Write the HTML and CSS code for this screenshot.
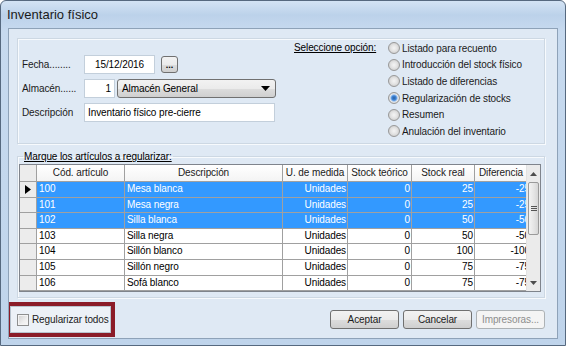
FILE: index.html
```html
<!DOCTYPE html>
<html>
  <head>
    <title>Inventario físico</title>
    <link rel="stylesheet" href="styles.css">
  </head>
  <body>
    <div class="window">
      <div class="titlebar">Inventario físico</div>
      <div class="client">

        <!-- Datos generales y opciones -->
        <div class="group top-group">
          <div class="fields">
            <div class="field-row">
              <span class="field-label">Fecha........</span>
              <span class="input input-date">15/12/2016</span>
              <span class="btn-dots">...</span>
            </div>
            <div class="field-row">
              <span class="field-label">Almacén......</span>
              <span class="input input-num">1</span>
              <span class="combo">
                Almacén General
                <svg class="combo-arrow" width="9" height="5" viewBox="0 0 9 5"><path d="M0 0h9L4.5 5z" fill="#000"/></svg>
              </span>
            </div>
            <div class="field-row">
              <span class="field-label">Descripción</span>
              <span class="input input-desc">Inventario físico pre-cierre</span>
            </div>
          </div>

          <div class="options">
            <span class="options-label">Seleccione opción:</span>
            <div class="radio-list">
              <div class="radio-row"><span class="radio"></span>Listado para recuento</div>
              <div class="radio-row"><span class="radio"></span>Introducción del stock físico</div>
              <div class="radio-row"><span class="radio"></span>Listado de diferencias</div>
              <div class="radio-row"><span class="radio on"></span>Regularización de stocks</div>
              <div class="radio-row"><span class="radio"></span>Resumen</div>
              <div class="radio-row"><span class="radio"></span>Anulación del inventario</div>
            </div>
          </div>
        </div>

        <!-- Rejilla de artículos -->
        <fieldset class="group grid-group">
          <legend>Marque los artículos a regularizar:</legend>
          <div class="grid-wrap">
            <div class="grid">
              <div class="hd ind"></div>
              <div class="hd">Cód. artículo</div>
              <div class="hd">Descripción</div>
              <div class="hd">U. de medida</div>
              <div class="hd">Stock teórico</div>
              <div class="hd">Stock real</div>
              <div class="hd hd-last">Diferencia</div>

              <div class="ind"><svg width="6" height="9" viewBox="0 0 6 9"><path d="M0 0l6 4.5L0 9z" fill="#000"/></svg></div>
              <div class="sel">100</div><div class="sel">Mesa blanca</div><div class="sel num">Unidades</div>
              <div class="sel num">0</div><div class="sel num">25</div><div class="sel num">-25</div>

              <div class="ind"></div>
              <div class="sel">101</div><div class="sel">Mesa negra</div><div class="sel num">Unidades</div>
              <div class="sel num">0</div><div class="sel num">25</div><div class="sel num">-25</div>

              <div class="ind"></div>
              <div class="sel">102</div><div class="sel">Silla blanca</div><div class="sel num">Unidades</div>
              <div class="sel num">0</div><div class="sel num">50</div><div class="sel num">-50</div>

              <div class="ind"></div>
              <div>103</div><div>Silla negra</div><div class="num">Unidades</div>
              <div class="num">0</div><div class="num">50</div><div class="num">-50</div>

              <div class="ind"></div>
              <div>104</div><div>Sillón blanco</div><div class="num">Unidades</div>
              <div class="num">0</div><div class="num">100</div><div class="num">-100</div>

              <div class="ind"></div>
              <div>105</div><div>Sillón negro</div><div class="num">Unidades</div>
              <div class="num">0</div><div class="num">75</div><div class="num">-75</div>

              <div class="ind"></div>
              <div>106</div><div>Sofá blanco</div><div class="num">Unidades</div>
              <div class="num">0</div><div class="num">75</div><div class="num">-75</div>
            </div>

            <div class="scrollbar">
              <div class="sb-btn">
                <svg width="7" height="4" viewBox="0 0 7 4"><path d="M0 4L3.5 0L7 4z" fill="#4d4d4d"/></svg>
              </div>
              <div class="sb-thumb"><span></span><span></span><span></span></div>
              <div class="sb-track"></div>
              <div class="sb-btn">
                <svg width="7" height="4" viewBox="0 0 7 4"><path d="M0 0h7L3.5 4z" fill="#4d4d4d"/></svg>
              </div>
            </div>
          </div>
        </fieldset>

        <!-- Pie: casilla y botones -->
        <div class="footer">
          <label class="check-panel">
            <span class="checkbox"></span>
            Regularizar todos
          </label>
          <div class="buttons">
            <span class="button">Aceptar</span>
            <span class="button">Cancelar</span>
            <span class="button disabled">Impresoras...</span>
          </div>
        </div>

      </div>
    </div>
  </body>
</html>
```

FILE: styles.css
```css
/* Page base */
body {
  margin: 0;
  font-family: "Liberation Sans", Arial, sans-serif;
  font-size: 10px;
  letter-spacing: -0.1px;
  color: #000;
}

/* Window frame with the glass look */
.window {
  width: 566px;
  height: 346px;
  box-sizing: border-box;
  border: 1px solid #56697f;
  border-radius: 6px 6px 0 0;
  background: linear-gradient(180deg, #d3e3f4 0%, #bcd2ea 14px, #c7daef 30px, #bfd4eb 100%);
  overflow: hidden;
}

.titlebar {
  height: 27px;
  line-height: 27px;
  padding-left: 6px;
  font-size: 13px;
  letter-spacing: 0;
  color: #1a1a1a;
}

/* Client area */
.client {
  height: 311px;
  box-sizing: border-box;
  margin: 0 7px 0 7px;
  padding: 9px 12px 0 8px;
  border: 1px solid #8ea2b8;
  background: #dfe9f4;
  overflow: hidden;
}

/* Group boxes */
.group {
  border: 1px solid #cdd8e3;
  box-shadow: inset 1px 1px 0 #f7fafd, 1px 1px 0 #f7fafd;
}

.top-group {
  height: 106px;
  box-sizing: border-box;
  display: flex;
}

/* Left side fields */
.fields {
  padding: 16px 0 0 4px;
  display: flex;
  flex-direction: column;
  gap: 5px;
}

.field-row {
  height: 19px;
  display: flex;
  align-items: center;
}

.field-label {
  width: 62px;
  color: #1a1a1a;
}

.input {
  height: 19px;
  box-sizing: border-box;
  line-height: 17px;
  padding: 0 3px;
  background: #fff;
  border: 1px solid #c3cfdb;
}

.input-date {
  width: 71px;
  text-align: center;
}

.input-num {
  width: 31px;
  text-align: right;
}

.input-desc {
  width: 191px;
}

/* Small "..." button */
.btn-dots {
  width: 17px;
  height: 17px;
  box-sizing: border-box;
  margin-left: 6px;
  border: 1px solid #707070;
  border-radius: 3px;
  background: linear-gradient(180deg, #f2f2f2 0%, #ebebeb 50%, #dddddd 51%, #cfcfcf 100%);
  font-weight: bold;
  font-size: 9px;
  line-height: 16px;
  text-align: center;
  letter-spacing: 0;
}

/* Combo box */
.combo {
  width: 159px;
  height: 19px;
  box-sizing: border-box;
  margin-left: 2px;
  padding: 0 4px;
  display: flex;
  align-items: center;
  justify-content: space-between;
  border: 1px solid #707070;
  border-radius: 3px;
  background: linear-gradient(180deg, #f2f2f2 0%, #ebebeb 50%, #dddddd 51%, #cfcfcf 100%);
}

.combo-arrow {
  margin-right: 1px;
}

/* Right side options */
.options {
  margin-left: 18px;
  padding-top: 1px;
  display: flex;
}

.options-label {
  width: 94px;
  line-height: 16.6px;
  text-decoration: underline;
}

.radio-row {
  height: 16.6px;
  display: flex;
  align-items: center;
  gap: 2px;
  color: #1a1a1a;
}

.radio {
  width: 12px;
  height: 12px;
  box-sizing: border-box;
  border: 1px solid #989898;
  border-radius: 50%;
  background: radial-gradient(circle, #f4f4f4 0, #e4e4e4 3px, #d3d3d3 5px);
}

.radio.on {
  background: radial-gradient(circle, #2a5f9e 0, #3f85d8 2.2px, #a8c9ef 3.4px, #eaeaea 4.2px, #d3d3d3 5px);
}

/* Grid group */
.grid-group {
  margin: 6px 0 0 0;
  padding: 1px 3px 5px 1px;
  min-inline-size: 0;
}

.grid-group legend {
  margin-left: 4px;
  padding: 0 1px;
  line-height: 13px;
  text-decoration: underline;
}

.grid-wrap {
  display: flex;
  border: 1px solid #7f848c;
  background: #fff;
}

.grid {
  width: 507px;
  overflow: hidden;
  display: grid;
  grid-template-columns: 17px 88px 158px 65px 64px 63px 57px;
  grid-template-rows: 17px repeat(7, 15.6px);
}

.grid > div {
  box-sizing: border-box;
  border-right: 1px solid #a0a0a0;
  border-bottom: 1px solid #a0a0a0;
  padding: 0 2px;
  line-height: 14px;
  white-space: nowrap;
  overflow: hidden;
}

.grid > .hd {
  line-height: 16px;
  text-align: center;
  background: linear-gradient(180deg, #ffffff 0%, #f4f4f4 100%);
  color: #1a1a1a;
}

.grid > .hd-last {
  padding-right: 6px;
}

.grid > .ind {
  padding: 0;
  background: #ececec;
  display: flex;
  align-items: center;
  justify-content: center;
}

.grid > .num {
  text-align: right;
  padding-right: 1px;
}

.grid > .sel {
  background: #3399ff;
  color: #fff;
}

/* Vertical scrollbar */
.scrollbar {
  width: 13px;
  display: flex;
  flex-direction: column;
  background: #ebebeb;
  border-left: 1px solid #e2e2e2;
}

.sb-btn {
  height: 17px;
  display: flex;
  align-items: center;
  justify-content: center;
}

.sb-thumb {
  height: 53px;
  margin: 0 1px;
  box-sizing: border-box;
  border: 1px solid #9a9a9a;
  border-radius: 2px;
  background: linear-gradient(90deg, #f3f3f3 0%, #e6e6e6 50%, #d6d6d6 100%);
  display: flex;
  flex-direction: column;
  justify-content: center;
  align-items: center;
  gap: 1px;
}

.sb-thumb span {
  width: 6px;
  height: 1px;
  background: #555;
}

.sb-track {
  flex: 1;
}

/* Footer with checkbox and buttons */
.footer {
  margin: 8px 0 0 -7px;
  display: flex;
  align-items: center;
}

.check-panel {
  width: 101px;
  height: 27px;
  box-sizing: border-box;
  padding-left: 6px;
  display: flex;
  align-items: center;
  gap: 3px;
  white-space: nowrap;
  background: #ecf1f7;
  border: 1px solid #b8c3ce;
  outline: 4px solid #8b1c28;
  color: #1a1a1a;
}

.checkbox {
  width: 12px;
  height: 12px;
  flex: none;
  box-sizing: border-box;
  border: 1px solid #8e8f8f;
  background: linear-gradient(135deg, #cfcfcf 0%, #eeeeee 60%, #f9f9f9 100%);
  box-shadow: inset 0 0 0 1px #f4f4f4;
}

.buttons {
  margin-left: auto;
  display: flex;
  gap: 4px;
}

.button {
  width: 69px;
  height: 19px;
  box-sizing: border-box;
  line-height: 17px;
  text-align: center;
  border: 1px solid #707070;
  border-radius: 3px;
  background: linear-gradient(180deg, #f2f2f2 0%, #ebebeb 50%, #dddddd 51%, #cfcfcf 100%);
  color: #1a1a1a;
}

.button.disabled {
  border-color: #adb2b5;
  background: #f4f4f4;
  color: #8d8d8d;
}
```
